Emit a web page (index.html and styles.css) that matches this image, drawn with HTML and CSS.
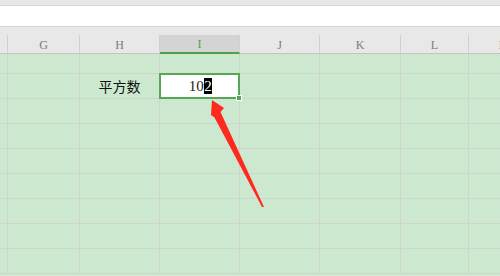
FILE: index.html
```html
<!DOCTYPE html>
<html>
<head>
<meta charset="utf-8">
<link rel="stylesheet" href="styles.css">
</head>
<body>
<div class="page">
  <div class="topbar"></div>
  <div class="formula"></div>
  <div class="sheet">
    <div class="hdr-row">
      <div class="hc"></div>
      <div class="hc">G</div>
      <div class="hc">H</div>
      <div class="hc active">I</div>
      <div class="hc">J</div>
      <div class="hc">K</div>
      <div class="hc">L</div>
      <div class="hc">M</div>
    </div>
    <div class="grid">
      <div class="row first"><div class="c"></div><div class="c"></div><div class="c"></div><div class="c"></div><div class="c"></div><div class="c"></div><div class="c"></div><div class="c"></div></div>
      <div class="row"><div class="c"></div><div class="c"></div><div class="c label">平方数</div><div class="c sel"><span class="val">10<span class="hl">2</span></span><span class="handle"></span></div><div class="c"></div><div class="c"></div><div class="c"></div><div class="c"></div></div>
      <div class="row"><div class="c"></div><div class="c"></div><div class="c"></div><div class="c"></div><div class="c"></div><div class="c"></div><div class="c"></div><div class="c"></div></div>
      <div class="row"><div class="c"></div><div class="c"></div><div class="c"></div><div class="c"></div><div class="c"></div><div class="c"></div><div class="c"></div><div class="c"></div></div>
      <div class="row"><div class="c"></div><div class="c"></div><div class="c"></div><div class="c"></div><div class="c"></div><div class="c"></div><div class="c"></div><div class="c"></div></div>
      <div class="row"><div class="c"></div><div class="c"></div><div class="c"></div><div class="c"></div><div class="c"></div><div class="c"></div><div class="c"></div><div class="c"></div></div>
      <div class="row"><div class="c"></div><div class="c"></div><div class="c"></div><div class="c"></div><div class="c"></div><div class="c"></div><div class="c"></div><div class="c"></div></div>
      <div class="row"><div class="c"></div><div class="c"></div><div class="c"></div><div class="c"></div><div class="c"></div><div class="c"></div><div class="c"></div><div class="c"></div></div>
      <div class="row"><div class="c"></div><div class="c"></div><div class="c"></div><div class="c"></div><div class="c"></div><div class="c"></div><div class="c"></div><div class="c"></div></div>
    </div>
  </div>
  <svg class="arrow" width="500" height="276" viewBox="0 0 500 276">
    <polygon points="212,100 224,108 220.5,112 264,207 262,207 214.5,117.5 211,115" fill="#ff2a1f"/>
  </svg>
</div>
</body>
</html>
```
FILE: styles.css
```css
html, body {
  margin: 0;
  padding: 0;
  background: #cce8cf;
}
.page {
  position: relative;
  width: 500px;
  height: 276px;
  overflow: hidden;
  background: #cce8cf;
}
.topbar {
  height: 5px;
  background: #e8e8e8;
  border-bottom: 1px solid #d6d6d6;
}
.formula {
  height: 20px;
  background: #ffffff;
  border-bottom: 1px solid #d4d4d4;
}
.sheet {
  background: #e8e8e8;
  padding-top: 8px;
  width: 540px;
}
.hdr-row, .row {
  display: grid;
  grid-template-columns: 8px 72px 80px 80px 80px 81px 68px 71px;
}
.hc {
  box-sizing: border-box;
  height: 19px;
  border-right: 1px solid #d0d0d0;
  border-bottom: 1px solid #c4c4c4;
  font-family: "Liberation Serif", "DejaVu Serif", serif;
  font-size: 12px;
  color: #7a7a7a;
  text-align: center;
  line-height: 20px;
  background: #e8e8e8;
}
.hc.active {
  background: #d4d4d4;
  color: #4ca24c;
  border-bottom: 2px solid #4ca24c;
  height: 19px;
  line-height: 19px;
}
.grid {
  background: #cce8cf;
}
.row .c {
  box-sizing: border-box;
  height: 25px;
  border-right: 1px solid #d0d4d0;
  border-bottom: 1px solid #d0d4d0;
  position: relative;
}
.row.first .c {
  height: 20px;
}
.c.label {
  font-family: "Noto Sans CJK SC", sans-serif;
  font-size: 14px;
  line-height: 24px;
  text-align: center;
  color: #111;
}
.c.sel {
  background: #ffffff;
  text-align: center;
  font-family: "Liberation Serif", "DejaVu Serif", serif;
  font-size: 15px;
  line-height: 24px;
  color: #222;
}
.c.sel::after {
  content: "";
  position: absolute;
  left: -1px;
  top: -1px;
  right: -1px;
  bottom: -1px;
  border: 2px solid #55a655;
}
.val {
  position: relative;
  left: 1px;
}
.hl {
  background: #000;
  color: #fff;
  padding: 0 0.5px;
}
.handle {
  position: absolute;
  right: -3px;
  bottom: -3px;
  width: 4px;
  height: 4px;
  background: #55a655;
  border: 1px solid #fff;
  z-index: 2;
}
.arrow {
  position: absolute;
  left: 0;
  top: 0;
}
```
